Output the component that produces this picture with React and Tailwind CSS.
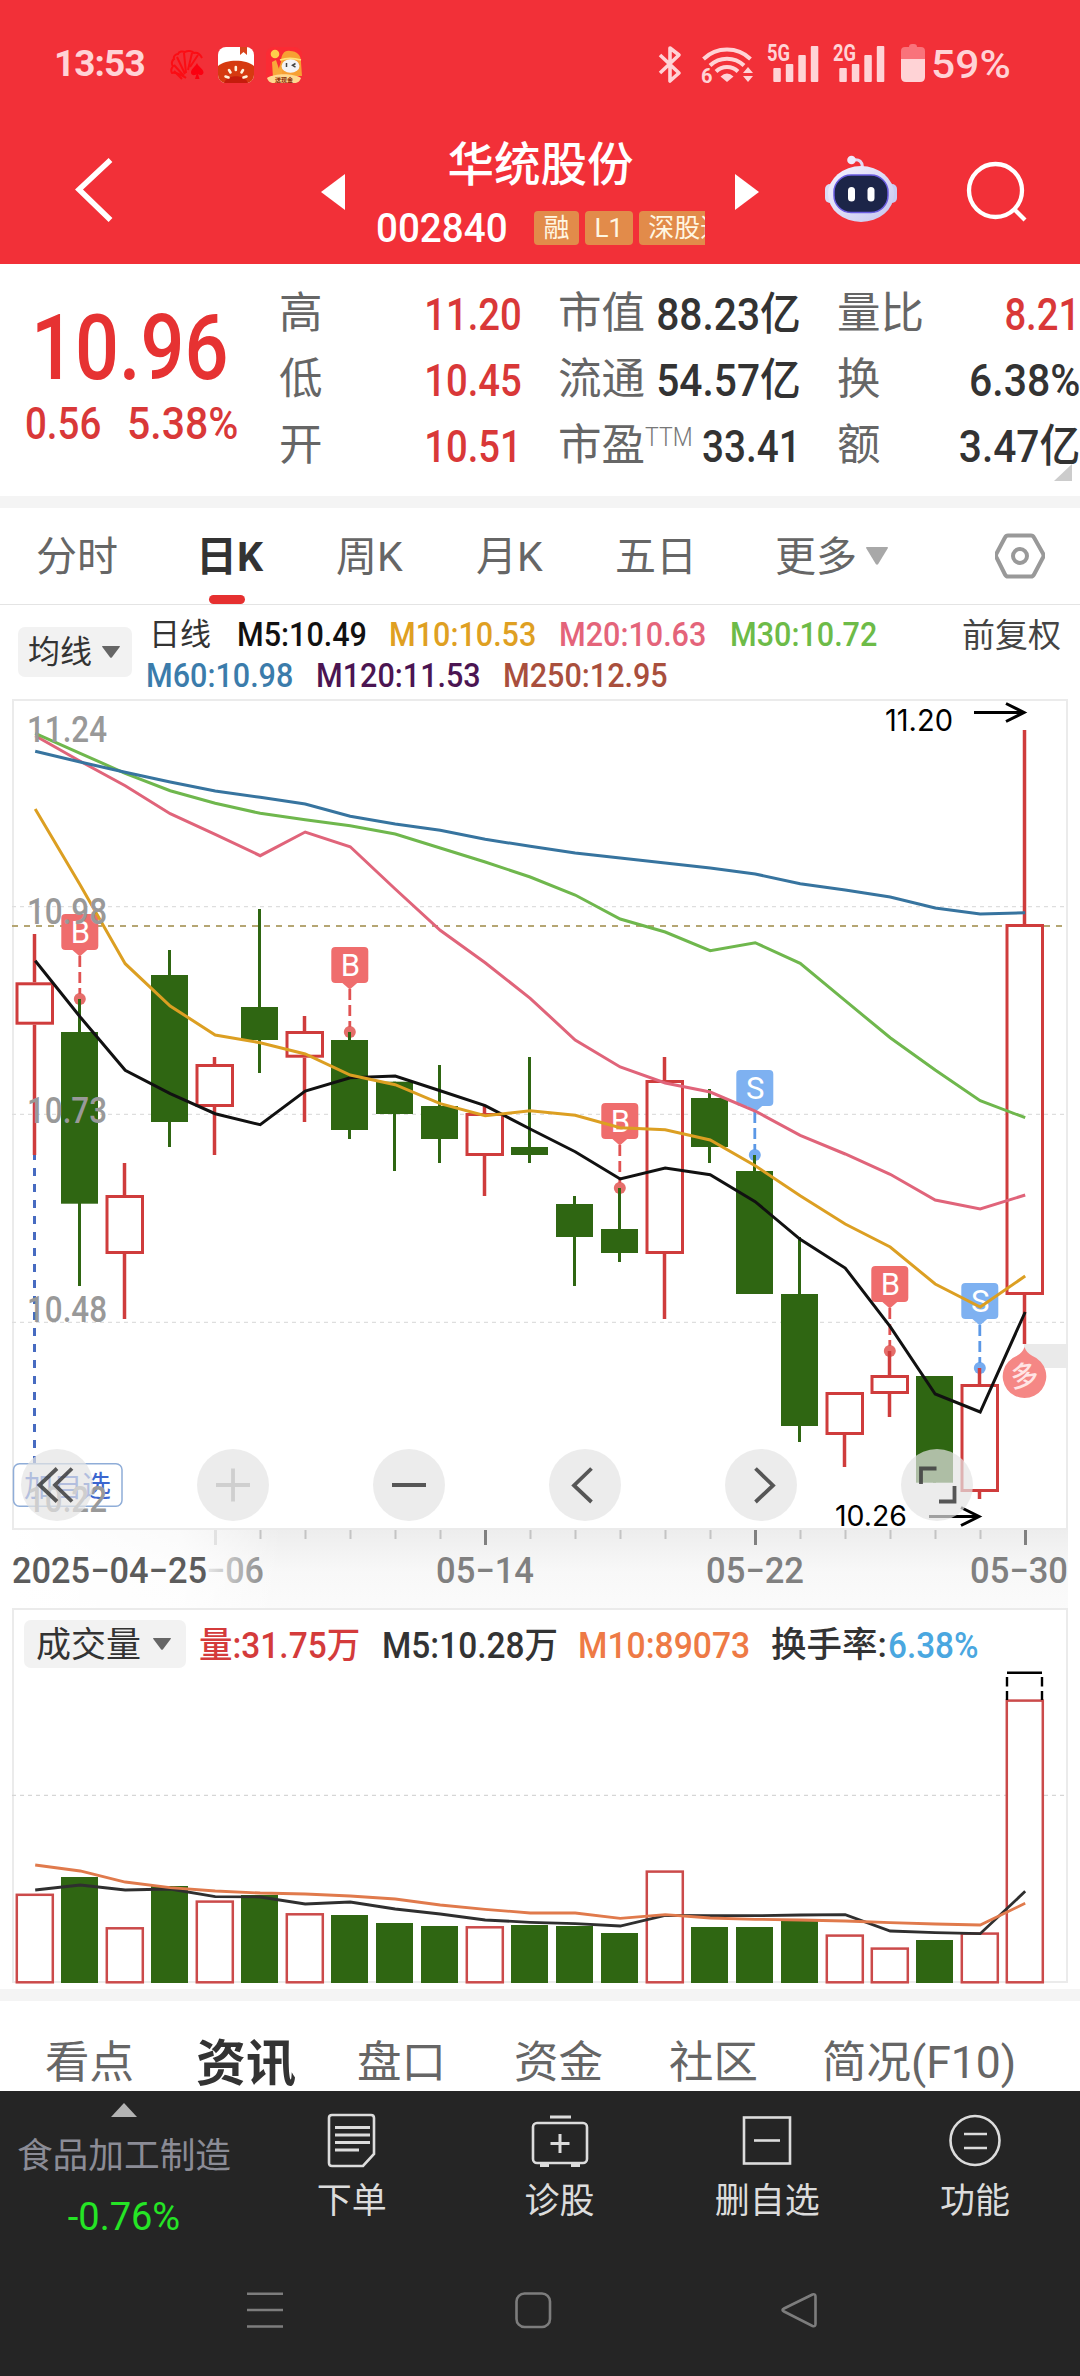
import clsx from 'clsx';

const GREEN = '#2f6612';
const RED = '#cf3c3c';

const STEP = 45;
const cx = (i) => 34.5 + i * STEP;

// [up, high, body top, body bottom, low]
const CANDLES = [
  [1, 934, 982.3, 1024.7, 1155],
  [0, 999, 1032, 1203.7, 1286],
  [1, 1163, 1195, 1254, 1319],
  [0, 950, 975, 1122, 1147],
  [1, 1057, 1064, 1107, 1155],
  [0, 909, 1007, 1040, 1073],
  [1, 1016, 1031, 1057.7, 1122],
  [0, 1032, 1040, 1130, 1139],
  [0, 1081.7, 1081.7, 1114, 1171],
  [0, 1065, 1106, 1139, 1163],
  [1, 1106, 1113, 1156, 1196],
  [0, 1057, 1147, 1155, 1163],
  [0, 1196, 1204, 1237, 1286],
  [0, 1188, 1229, 1253, 1262],
  [1, 1057, 1080, 1254, 1319],
  [0, 1089, 1098, 1147, 1163],
  [0, 1155, 1171, 1294, 1294],
  [0, 1237, 1294, 1426, 1442],
  [1, 1392, 1392, 1435, 1467],
  [1, 1351, 1375, 1394, 1417],
  [0, 1376, 1376, 1482.7, 1482.7],
  [1, 1368, 1384, 1492, 1499],
  [1, 730, 924, 1295, 1344],
];

const AVERAGES = [
  { color: '#111111', ys: [960.7, 1017, 1070.3, 1093.7, 1113.7, 1124.7, 1091, 1077.7, 1076, 1090.7, 1105.7, 1129, 1151.7, 1179, 1168, 1174.7, 1201.7, 1239.3, 1268, 1326.7, 1394, 1412, 1312] },
  { color: '#dc9f22', ys: [809, 885, 963.7, 1006, 1035, 1042.7, 1054, 1075, 1084.7, 1103.7, 1115.7, 1110.7, 1115.3, 1127.7, 1129.7, 1140, 1165.7, 1195.7, 1224, 1247, 1284, 1307, 1276] },
  { color: '#e0647a', ys: [735.7, 761.3, 785.7, 813.7, 834.3, 855.7, 832, 846.7, 889, 930.3, 962.7, 998.3, 1040, 1067, 1083, 1092, 1111, 1135.3, 1154, 1174.3, 1200, 1209, 1195] },
  { color: '#6fb74d', ys: [733.3, 753.3, 773.3, 790.7, 803.3, 813.3, 819.7, 825.7, 834, 848, 862, 877, 895, 919, 932, 950.7, 942.7, 963.3, 1000.7, 1037.7, 1070, 1100.7, 1117.7] },
  { color: '#37749f', ys: [751.3, 762, 772.3, 782, 791, 797.3, 804, 816.3, 824, 830.3, 839.3, 846.3, 853, 858, 863, 868, 874, 883.7, 890, 897, 908, 914, 912.7] },
];

const MARKS = [
  ['B', 1, 999],
  ['B', 7, 1032],
  ['B', 13, 1188],
  ['S', 16, 1155],
  ['B', 19, 1351],
  ['S', 21, 1368],
];

const VOLUMES = [1893.5, 1877, 1927, 1886, 1900.3, 1895, 1913, 1915, 1923, 1926, 1926, 1925, 1926, 1933, 1870.3, 1927, 1927, 1921, 1934.3, 1947.3, 1940, 1932.3, 1699.3];
const VOL_M5 = [1890, 1885, 1890, 1889, 1896.7, 1897, 1904, 1902, 1909, 1914, 1920, 1922.3, 1923.7, 1926, 1915.3, 1915.7, 1915.7, 1915, 1914.7, 1931, 1932.7, 1933.7, 1891.3];
const VOL_M10 = [1865, 1871, 1882, 1887.7, 1891, 1893, 1894, 1896, 1899, 1905, 1909.3, 1913, 1913, 1918.3, 1914.7, 1918, 1919.3, 1920, 1921, 1922.7, 1924, 1925, 1903.3];

const PRICES = [['11.24', 742], ['10.98', 924], ['10.73', 1123], ['10.48', 1322], ['10.22', 1512]];

const UP = 'text-[#d93838] scale-x-[0.85]';
const STATS = [
  [['高', '11.20', UP], ['低', '10.45', UP], ['开', '10.51', UP]],
  [['市值', '88.23亿', 'text-[#333] scale-x-[0.905]'], ['流通', '54.57亿', 'text-[#333] scale-x-[0.905]'], ['市盈', '33.41', 'text-[#333] scale-x-[0.86]', 'TTM']],
  [['量比', '8.21', UP], ['换', '6.38%', 'text-[#333] scale-x-[0.91]'], ['额', '3.47亿', 'text-[#333] scale-x-[0.905]']],
];

const points = (ys) => ys.map((y, i) => `${cx(i) + 0.7},${y}`).join(' ');

function Label({ x, y, w, size = 36, children, ...rest }) {
  return (
    <text x={x} y={y} fontSize={size} textLength={w} lengthAdjust="spacingAndGlyphs" {...rest}>{children}</text>
  );
}

function StatusBar() {
  return (
    <div className="flex h-[128px] items-start pt-[44px] text-[#ffd3d6]">
      <div className="ml-[54px] mt-[1px] w-[116px] text-[37px] font-bold leading-[38px] tracking-[-0.025em]">13:53</div>
      <svg className="mt-[3px]" width="134" height="37" viewBox="170 47 134 37">
        <g fill="none" stroke="#fb0d14" strokeWidth="2">
          <path d="M186 78c-5-3-9-6-14-5-2-3 0-5 1-7-2-2-1-6 1-7-1-3 2-5 4-5 1-3 5-3 7-2 3-2 7-1 9 1 4-1 6 1 8 5M184 76l-10-11M185 74l-8-17M186 73l-2-20M188 70l4-17M190 67l8-12" />
          <path d="M174 71l8 8" />
        </g>
        <path d="M197 63c-2 4-6 6-6 9.500c0 3 4 3.500 5.500 1.500l-1.500 5h4.500l-1.500-5c2 2 5.500 1 5.500-1.500c0-3.500-5-5.500-6.500-9.500z" fill="#fb0010" />
        <rect x="218" y="47" width="36" height="36" rx="8" fill="#fff" />
        <path d="M240 47h7v8l-3.500-3l-3.500 3z" fill="#d8431d" />
        <path d="M218 66c8-7 28-7 36 0v9a8 8 0 0 1-8 8h-20a8 8 0 0 1-8-8z" fill="#d63a10" />
        <path d="M224 83c3-9 21-9 24 0z" fill="#c51c0c" />
        <g stroke="#fff2dc" strokeWidth="2.600" strokeLinecap="round">
          <path d="M235.800 67v3M229 70l1.500 2.500M243 70l-1.500 2.500M225.500 76.500l3 1M246.500 76.500l-3 1" />
        </g>
        <rect x="266" y="47" width="36" height="36" rx="8" fill="#fb2b34" />
        <path d="M281 62c0-7 3-12 9-11c7 0 11 4 11 11l1 14h-26z" fill="#f7a034" />
        <path d="M272 62l4-2 3 9 3-3v12h-9z" fill="#f9a83a" />
        <circle cx="275" cy="54" r="4.300" fill="#ffd04a" />
        <path d="M280 60c6-2 14-2 21 0" stroke="#ffe27a" strokeWidth="1.600" fill="none" />
        <ellipse cx="290.500" cy="66" rx="9" ry="6.800" fill="#f3f3f6" />
        <path d="M286.500 63v4M295.500 63.500l-3 1.800l3 1.800" stroke="#444" strokeWidth="1.500" fill="none" />
        <path d="M267 78c8-5 26-5 34 0c-1 3-3 5-7 5h-20c-4 0-6-2-7-5z" fill="#ffd991" />
        <text x="284" y="82" fontSize="6" fontWeight="700" textAnchor="middle" fill="#8a2c08">送现金</text>
      </svg>
      <svg className="ml-[354px] overflow-visible" width="270" height="40" viewBox="658 44 270 40" fill="#ffd3d6">
        <path d="M660 55l19 18l-9 8V48l9 7l-19 18" fill="none" stroke="#ffd3d6" strokeWidth="3.600" strokeLinejoin="round" />
        <g fill="none" stroke="#ffd3d6" strokeWidth="4">
          <path d="M703.500 59a34 34 0 0 1 47 0M710 65.500a24.500 24.500 0 0 1 34 0M716 71.500a16 16 0 0 1 22 0" />
        </g>
        <path d="M720.500 76.500q6.500-6 13 0L727 82z" />
        <path d="M743 73l5-6l5 6zM743 76l5 6l5-6z" />
        <text x="701" y="82.500" fontSize="20" fontWeight="700">6</text>
        <Label x={767} y={61} w={23} size={23} fontWeight="700">5G</Label>
        <Label x={833} y={61} w={23} size={23} fontWeight="700">2G</Label>
        {[0, 66].map((dx) => [68, 64, 55, 46].map((y, i) => (
          <rect key={`${dx}-${i}`} x={773.3 + dx + i * 12.5} y={y} width="7.500" height={82 - y} rx="1" />
        )))}
        <path d="M909 47q0-3 3-3h2q3 0 3 3h4q4 0 4 4v8h-24v-8q0-4 4-4z" fill="#f9737b" />
        <path d="M901 59h24v18q0 5-5 5h-14q-5 0-5-5z" />
      </svg>
      <div className="ml-[3px] mt-[2px] text-[38px] font-medium leading-[38px]"><span className="inline-block origin-left scale-x-[1.12]">59%</span></div>
    </div>
  );
}

function Badge({ children }) {
  return <span className="flex h-[34px] shrink-0 items-center rounded-[4px] bg-[#e28b4a] px-[9.500px] text-[26px] leading-none text-[#fff6e2]">{children}</span>;
}

function Header() {
  return (
    <header className="h-[264px] bg-[#f23038] text-white">
      <StatusBar />
      <div className="flex h-[136px]">
        <svg className="ml-[70px] mt-[24px] shrink-0" width="50" height="76" viewBox="70 152 50 76">
          <path d="M110.500 160L79 189.500L110.500 220" fill="none" stroke="#fff" strokeWidth="5.500" />
        </svg>
        <svg className="ml-[201px] mt-[46px] shrink-0" width="24" height="36" viewBox="0 0 24 36" fill="#fff"><path d="M24 0v36L0 18z" /></svg>
        <div className="ml-[31px] flex w-[329px] shrink-0 flex-col">
          <h1 className="mt-[14px] w-full text-center text-[46.500px] font-medium leading-[46px]">华统股份</h1>
          <div className="mt-[23px] flex h-[34px] items-center overflow-hidden">
            <span className="w-[158px] shrink-0 text-[41.500px] font-medium leading-[34px]"><span className="inline-block origin-left scale-x-[0.93]">002840</span></span>
            <div className="flex gap-[6px]">
              <Badge>融</Badge>
              <Badge>L1</Badge>
              <Badge>深股通</Badge>
            </div>
          </div>
        </div>
        <svg className="ml-[30px] mt-[46px] shrink-0" width="24" height="36" viewBox="0 0 24 36" fill="#fff"><path d="M0 0v36l24-18z" /></svg>
        <svg className="ml-[65px] mt-[27px] shrink-0" width="74" height="70" viewBox="824 155 74 70">
          <defs>
            <linearGradient id="bot" x1="0" y1="0" x2="1" y2="1"><stop offset="0" stopColor="#f6f3ff" /><stop offset="1" stopColor="#c5c6ee" /></linearGradient>
          </defs>
          <path d="M853 160c7-1 9 2 9.500 7" fill="none" stroke="#e3d9f3" strokeWidth="3" />
          <circle cx="851.500" cy="160" r="4.300" fill="#efe9fb" />
          <rect x="825" y="184" width="12" height="19" rx="5" fill="#dcdcf6" />
          <rect x="885" y="184" width="12" height="19" rx="5" fill="#c9ccf3" />
          <ellipse cx="861" cy="194" rx="33" ry="28" fill="url(#bot)" />
          <rect x="834" y="175" width="54" height="37.500" rx="17" fill="#1c2548" stroke="#6a5ce0" strokeWidth="1.500" />
          <rect x="848" y="187" width="7" height="14.500" rx="3.500" fill="#fff" />
          <rect x="867.500" y="187" width="7" height="14.500" rx="3.500" fill="#fff" />
        </svg>
        <svg className="ml-[67px] mt-[32px] shrink-0" width="62" height="64" viewBox="964 160 62 64" fill="none" stroke="#fff" strokeWidth="4.300">
          <circle cx="994.500" cy="190.500" r="26.500" />
          <path d="M1013 209l11 11" />
        </svg>
      </div>
    </header>
  );
}

function Quote() {
  return (
    <section className="relative flex h-[232px] bg-white">
      <div className="w-[279px] shrink-0 pt-[41px]">
        <div className="ml-[31px] text-[90px] font-medium leading-[88px] text-[#e63232]"><span className="inline-block origin-left scale-x-[0.86]">10.96</span></div>
        <div className="mt-[8px] flex text-[45px] font-medium leading-[46px] text-[#d93838]">
          <span className="ml-[25px] w-[102px]"><span className="inline-block origin-left scale-x-[0.855]">0.56</span></span>
          <span className="inline-block origin-left scale-x-[0.91]">5.38%</span>
        </div>
      </div>
      <div className="flex w-[801px] shrink-0 justify-between pt-[17px]">
        {STATS.map((col, i) => (
          <div key={i} className="w-[243px]">
            {col.map(([name, value, style, sup]) => (
              <div key={name} className="flex h-[66px] items-center whitespace-nowrap">
                <span className="text-[43.500px] leading-none text-[#666]">{name}</span>
                {sup && <span className="mb-[17px] w-0 text-[25px] font-light leading-none text-[#777]"><span className="inline-block origin-left scale-x-[0.92]">{sup}</span></span>}
                <span className="flex w-0 grow justify-end text-[45px] font-medium leading-none">
                  <span className={clsx('inline-block origin-right', style)}>{value}</span>
                </span>
              </div>
            ))}
          </div>
        ))}
      </div>
      <svg className="absolute bottom-[15px] right-[8px]" width="18" height="17" viewBox="0 0 18 17"><path d="M18 0v17H0z" fill="#ccc" /></svg>
    </section>
  );
}

function Caret({ className, color = '#666' }) {
  return <svg className={className} viewBox="0 0 18 12" preserveAspectRatio="none"><path d="M.5 0h17q.8 0 .2 1L10 11.300q-1 1-2 0L.3 1Q-.3 0 .5 0z" fill={color} /></svg>;
}

function PeriodTabs() {
  return (
    <nav className="flex h-[97px] items-center border-b border-[#e4e4e4] text-[41px] leading-none text-[#666]">
      <span className="ml-[36px] w-[160px] pt-[3px]">分时</span>
      <span className="relative flex h-full w-[140px] items-center pt-[3px] font-bold text-[#333]">
        日K
        <i className="absolute bottom-0 left-[13px] h-[9px] w-[36px] rounded-full bg-[#e63030]" />
      </span>
      <span className="w-[140px] pt-[3px]">周K</span>
      <span className="w-[139px] pt-[3px]">月K</span>
      <span className="w-[160px] pt-[3px]">五日</span>
      <span className="pt-[3px]">更多</span>
      <Caret className="ml-[9px] h-[18px] w-[22px]" color="#a8a8a8" />
      <svg className="ml-[107px]" width="50" height="50" viewBox="995 531 50 50" fill="none" stroke="#999" strokeWidth="4" strokeLinejoin="round">
        <path d="M1008 535.500h23q2 0 3 2l9 16q1 2 0 4l-9 17q-1 2-3 2h-23q-2 0-3-2l-8.500-17q-1-2 0-4l8.500-16q1-2 3-2z" />
        <circle cx="1020" cy="556" r="7" />
      </svg>
    </nav>
  );
}

function Ma({ className, children }) {
  return <span className={clsx('whitespace-nowrap', className)}><span className="inline-block origin-left scale-x-[0.925]">{children}</span></span>;
}

function AverageLegend() {
  return (
    <div className="flex h-[94px] font-medium">
      <div className="ml-[18px] mt-[22px] flex h-[50px] w-[114px] shrink-0 items-center rounded-[7px] bg-[#f2f2f2] pl-[10px] text-[32px] font-normal leading-none text-[#333]">
        均线<Caret className="ml-[10px] h-[12px] w-[18px]" />
      </div>
      <div className="ml-[14px] w-[816px] shrink-0 pt-[13px] text-[33px] leading-[34px]">
        <div className="flex h-[41px]">
          <span className="ml-[3px] w-[88px] text-[31px] font-normal text-[#333]">日线</span>
          <Ma className="w-[152px] text-[#111]">M5:10.49</Ma>
          <Ma className="w-[170px] text-[#dfa022]">M10:10.53</Ma>
          <Ma className="w-[171px] text-[#e4647a]">M20:10.63</Ma>
          <Ma className="text-[#6dbb48]">M30:10.72</Ma>
        </div>
        <div className="flex">
          <Ma className="w-[170px] text-[#3b7cab]">M60:10.98</Ma>
          <Ma className="w-[187px] text-[#4b1552]">M120:11.53</Ma>
          <Ma className="text-[#a94f3d]">M250:12.95</Ma>
        </div>
      </div>
      <span className="whitespace-nowrap pt-[15px] text-[33px] font-normal leading-[32px] text-[#444]">前复权</span>
    </div>
  );
}

function Candle({ i, data: [up, high, top, bottom, low] }) {
  const x = cx(i);
  if (up) {
    return (
      <g stroke={RED} strokeWidth="3" fill="none">
        <path d={`M${x} ${high}V${top}M${x} ${bottom}V${low}`} strokeWidth="3.500" />
        <rect x={x - 17.5} y={top + 1.5} width="35.500" height={bottom - top - 3} />
      </g>
    );
  }
  return (
    <g fill={GREEN}>
      <rect x={x - 1.5} y={high} width="3" height={low - high} />
      <rect x={x - 18.5} y={top} width="37" height={bottom - top} />
    </g>
  );
}

function Mark({ type, i, y }) {
  const x = cx(i) + 0.3;
  const color = type === 'B' ? '#ef6d6d' : '#7eb1f1';
  const line = type === 'B' ? '#e05252' : '#5b98e6';
  return (
    <g>
      <rect x={x - 18.5} y={y - 85} width="37" height="36" rx="4" fill={color} />
      <path d={`M${x - 8} ${y - 49.5}h16l-8 7z`} fill={color} />
      <path d={`M${x} ${y - 43}V${y - 5}`} stroke={line} strokeWidth="2.800" strokeDasharray="11 5" />
      <text x={x + 0.5} y={y - 56} fontSize="31" textAnchor="middle" fill="#fff">{type}</text>
    </g>
  );
}

const TOOLS = [
  { name: 'first', d: 'M36 19.500L18.500 36L36 52.500M51 19.500L34 36L51 52.500' },
  { name: 'zoom-in', d: 'M19 36h34M36 19.500v33', off: true },
  { name: 'zoom-out', d: 'M19 36h34' },
  { name: 'prev', d: 'M42.500 19.500L25 36.500L42.500 53' },
  { name: 'next', d: 'M30.500 19.500L48 36.500L30.500 53' },
  { name: 'expand', d: 'M35.500 19.500H20V35M38 52.500H53.500V37' },
];

function PriceChart() {
  return (
    <div className="relative h-[909px]">
      <svg width="1080" height="924" viewBox="0 699 1080 924" className="block">
        <defs>
          <linearGradient id="axis" x1="0" y1="0" x2="0" y2="1"><stop offset="0" stopColor="#ededed" /><stop offset=".5" stopColor="#f8f8f8" /><stop offset="1" stopColor="#fbfbfb" /></linearGradient>
          <linearGradient id="fade" x1="0" y1="0" x2="1" y2="0"><stop offset="0" stopColor="#fff" /><stop offset=".62" stopColor="#fff" stopOpacity=".75" /><stop offset="1" stopColor="#fff" stopOpacity="0" /></linearGradient>
          <linearGradient id="date" gradientUnits="userSpaceOnUse" x1="206" y1="0" x2="264" y2="0"><stop offset="0" stopColor="#e8e8e8" /><stop offset="1" stopColor="#8d8d8d" /></linearGradient>
        </defs>

        {/* time axis strip */}
        <rect x="12" y="1529" width="1056" height="85" fill="url(#axis)" />
        <rect x="12" y="1529" width="270" height="85" fill="url(#fade)" />

        <rect x="13" y="700" width="1054" height="829" fill="#fff" stroke="#ebebeb" strokeWidth="2" />
        <path d="M12 906.700H1067M12 1114.300H1067M12 1322.300H1067" stroke="#dedede" strokeWidth="1.300" strokeDasharray="4 4" />
        <path d="M12 926H1066" stroke="#b5a673" strokeWidth="2" strokeDasharray="6 6" />
        <rect x="1024" y="1344" width="44" height="24" fill="#eaeaea" />

        {MARKS.map(([type, i, y]) => (
          <circle key={i} cx={cx(i) + 0.3} cy={y} r="6" fill={type === 'B' ? '#e56d6a' : '#75abf0'} />
        ))}
        {CANDLES.map((c, i) => <Candle key={i} i={i} data={c} />)}
        {MARKS.map(([type, i, y]) => <Mark key={i} type={type} i={i} y={y} />)}
        {AVERAGES.map((a) => <polyline key={a.color} points={points(a.ys)} fill="none" stroke={a.color} strokeWidth="3" />)}

        {/* date added to the watch list */}
        <path d="M34.500 1155V1463" stroke="#476bc1" strokeWidth="3" strokeDasharray="8 8" strokeDashoffset="3" />
        <rect x="13.500" y="1463.700" width="108.500" height="42.500" rx="6" fill="#fff" stroke="#8fadd8" strokeWidth="1.500" />
        <Label x={24} y={1497} w={87} size={29} fill="#3c66cf">加自选</Label>

        <g fill="#999" fontWeight="500">
          {PRICES.map(([p, y]) => <Label key={p} x={27} y={y} w={80}>{p}</Label>)}
        </g>

        <g className="font-[Inter,sans-serif]">
          <Label x={885} y={730.5} w={68} size={29.5}>11.20</Label>
          <Label x={835} y={1526} w={72} size={29}>10.26</Label>
        </g>
        <path d="M974 712.500h50M1006 703.500l18 9l-18 9M929 1516.500h50M961 1507.500l18 9l-18 9" stroke="#000" strokeWidth="3" fill="none" />

        <path d="M1024.500 1347q2 6 8 9a21.800 21.800 0 1 1-16 0q6-3 8-9z" fill="#f58785" />
        <text x="1024.500" y="1386" fontSize="28" textAnchor="middle" fill="#ffe4e4" fontWeight="500" transform="rotate(-8 1024.500 1376)">多</text>

        {CANDLES.map((_, i) => i > 4 && i % 6 !== 4 && <rect key={i} x={cx(i)} y="1530" width="2" height="9" fill="#c4c4c4" />)}
        <rect x="214" y="1530" width="3" height="15" fill="#e2e2e2" />
        {[10, 16, 22].map((i) => <rect key={i} x={cx(i) - 0.5} y="1530" width="3" height="15" fill="#808080" />)}

        <g fill="#808080" fontWeight="500">
          <Label x={12} y={1583} w={195} fill="#5c5c5c">2025−04−25</Label>
          <Label x={206} y={1583} w={58} fill="url(#date)">−06</Label>
          <Label x={436} y={1583} w={98}>05−14</Label>
          <Label x={706} y={1583} w={98}>05−22</Label>
          <Label x={970} y={1583} w={98}>05−30</Label>
        </g>
      </svg>
      <div className="absolute left-[21px] top-[750px] flex gap-[104px]">
        {TOOLS.map((t) => (
          <button key={t.name} aria-label={t.name} className="h-[72px] w-[72px] rounded-full bg-[#e4e4e4]/70">
            <svg viewBox="0 0 72 72" fill="none" stroke={t.off ? '#cfcfcf' : '#3c3c3c'} strokeOpacity={t.off ? 1 : 0.85} strokeWidth="3.800"><path d={t.d} /></svg>
          </button>
        ))}
      </div>
    </div>
  );
}

function VolumeChart() {
  return (
    <div className="relative h-[381px]">
      <svg width="1080" height="381" viewBox="0 1608 1080 381" className="block">
        <rect x="13" y="1609" width="1054" height="373" fill="#fff" stroke="#ebebeb" strokeWidth="2" />
        <path d="M12 1795.300H1067" stroke="#d6d6d6" strokeWidth="1.300" strokeDasharray="4 4" />
        {VOLUMES.map((y, i) => CANDLES[i][0]
          ? <rect key={i} x={cx(i) - 17.7} y={y + 1.3} width="36" height={1982.3 - y - 1.3} fill="#fff" stroke="#cb4a4a" strokeWidth="2.500" />
          : <rect key={i} x={cx(i) - 18.5} y={y} width="37" height={1983 - y} fill={GREEN} />)}
        <polyline points={points(VOL_M5)} fill="none" stroke="#2f2f2f" strokeWidth="2.800" />
        <polyline points={points(VOL_M10)} fill="none" stroke="#e07a4c" strokeWidth="2.800" />
        {/* projected volume for the day */}
        <path d="M1007 1672.700h35M1007 1677v9.500M1007 1691v9M1042 1677v9.500M1042 1691v9" stroke="#000" strokeWidth="2.400" />
      </svg>
      <div className="absolute left-[24px] top-[12px] flex h-[48px] items-center whitespace-nowrap text-[36px] font-medium leading-none text-[#333]">
        <div className="flex h-[48px] w-[162px] items-center rounded-[7px] bg-[#f2f2f2] pl-[12px] text-[35px] font-normal">
          <span className="pt-[2px]">成交量</span><Caret className="ml-[12px] h-[12px] w-[18px]" />
        </div>
        <span className="ml-[13px] w-[183px] pt-[3px] text-[#d43b3b]"><span className="inline-block origin-left scale-x-[0.93]">量:31.75万</span></span>
        <span className="w-[196px] pt-[3px]"><span className="inline-block origin-left scale-x-[0.93]">M5:10.28万</span></span>
        <span className="w-[193px] pt-[3px] text-[#ee7a45]"><span className="inline-block origin-left scale-x-[0.935]">M10:89073</span></span>
        <span className="w-[117px] pt-[3px] text-[35.500px]">换手率:</span>
        <span className="inline-block origin-left scale-x-[0.925] pt-[3px] text-[#4aa7e0]">6.38%</span>
      </div>
    </div>
  );
}

function InfoTabs() {
  return (
    <nav className="flex h-[90px] items-center whitespace-nowrap pt-[35px] text-[44.500px] leading-none text-[#666]">
      <span className="ml-[45px] w-[151px]">看点</span>
      <span className="w-[161px] text-[50px] font-bold text-[#333]">资讯</span>
      <span className="w-[157px]">盘口</span>
      <span className="w-[155px]">资金</span>
      <span className="w-[153px]">社区</span>
      <span>简况(F10)</span>
    </nav>
  );
}

const ACTIONS = [
  { label: '下单', icon: <><path d="M5 2h39q3 0 3 3v36l-11 12H5q-3 0-3-3V5q0-3 3-3z" transform="translate(5 0)" /><path d="M13 14.500h35M13 22h35M13 29.500h35M13 37h24" strokeWidth="3" /></> },
  { label: '诊股', icon: <><rect x="3" y="10" width="54" height="40" rx="4" /><path d="M20 4h21M30 21v19M20.500 30.500h19M10 52.500h9M41 52.500h9" strokeWidth="3" /></> },
  { label: '删自选', icon: <><rect x="7" y="4.500" width="46" height="46" /><path d="M17 27.500h26" /></> },
  { label: '功能', icon: <><circle cx="30" cy="27.500" r="24.500" /><path d="M19 21h23M19 35h23" /></> },
];

function BottomBar() {
  return (
    <footer className="flex h-[285px] flex-col bg-[#252525]">
      <div className="flex h-[170px]">
        <div className="flex w-[248px] shrink-0 flex-col items-center whitespace-nowrap pt-[12px]">
          <svg width="26" height="14" viewBox="0 0 26 14"><path d="M13 0l13 14H0z" fill="#b3b3b3" /></svg>
          <span className="mt-[21px] text-[35.700px] leading-[36px] text-[#8b8c96]">食品加工制造</span>
          <span className="mt-[25px] text-[38px] leading-[36px] text-[#25e525]">-0.76%</span>
        </div>
        {ACTIONS.map((a) => (
          <div key={a.label} className="flex w-[207.700px] shrink-0 flex-col items-center pt-[22px]">
            <svg width="60" height="56" viewBox="0 0 60 56" fill="none" stroke="#dcdcdc" strokeWidth="2.600">{a.icon}</svg>
            <span className="mt-[15px] text-[35px] leading-[36px] text-[#dcdcdc]">{a.label}</span>
          </div>
        ))}
      </div>
      <svg className="mt-[26px]" width="1080" height="48" viewBox="0 2287 1080 48" fill="none" stroke="#7d7d7d" strokeWidth="2.600">
        <path d="M247 2293.700h36M247 2310h36M247 2326.500h36" />
        <rect x="516.500" y="2293.500" width="33.500" height="33.500" rx="8" />
        <path d="M812.500 2294.500L784 2308.500q-3 1.500 0 3l28.500 14.500q3 1 3-2v-27.500q0-3-3-2z" />
      </svg>
    </footer>
  );
}

export default function App() {
  return (
    <div className="h-[2376px] w-[1080px] overflow-hidden bg-white font-[Roboto,'Noto_Sans_CJK_SC',sans-serif]">
      <Header />
      <Quote />
      <div className="h-[12px] bg-[#f4f4f4]" />
      <PeriodTabs />
      <AverageLegend />
      <PriceChart />
      <VolumeChart />
      <div className="h-[12px] bg-[#f4f4f4]" />
      <InfoTabs />
      <BottomBar />
    </div>
  );
}
